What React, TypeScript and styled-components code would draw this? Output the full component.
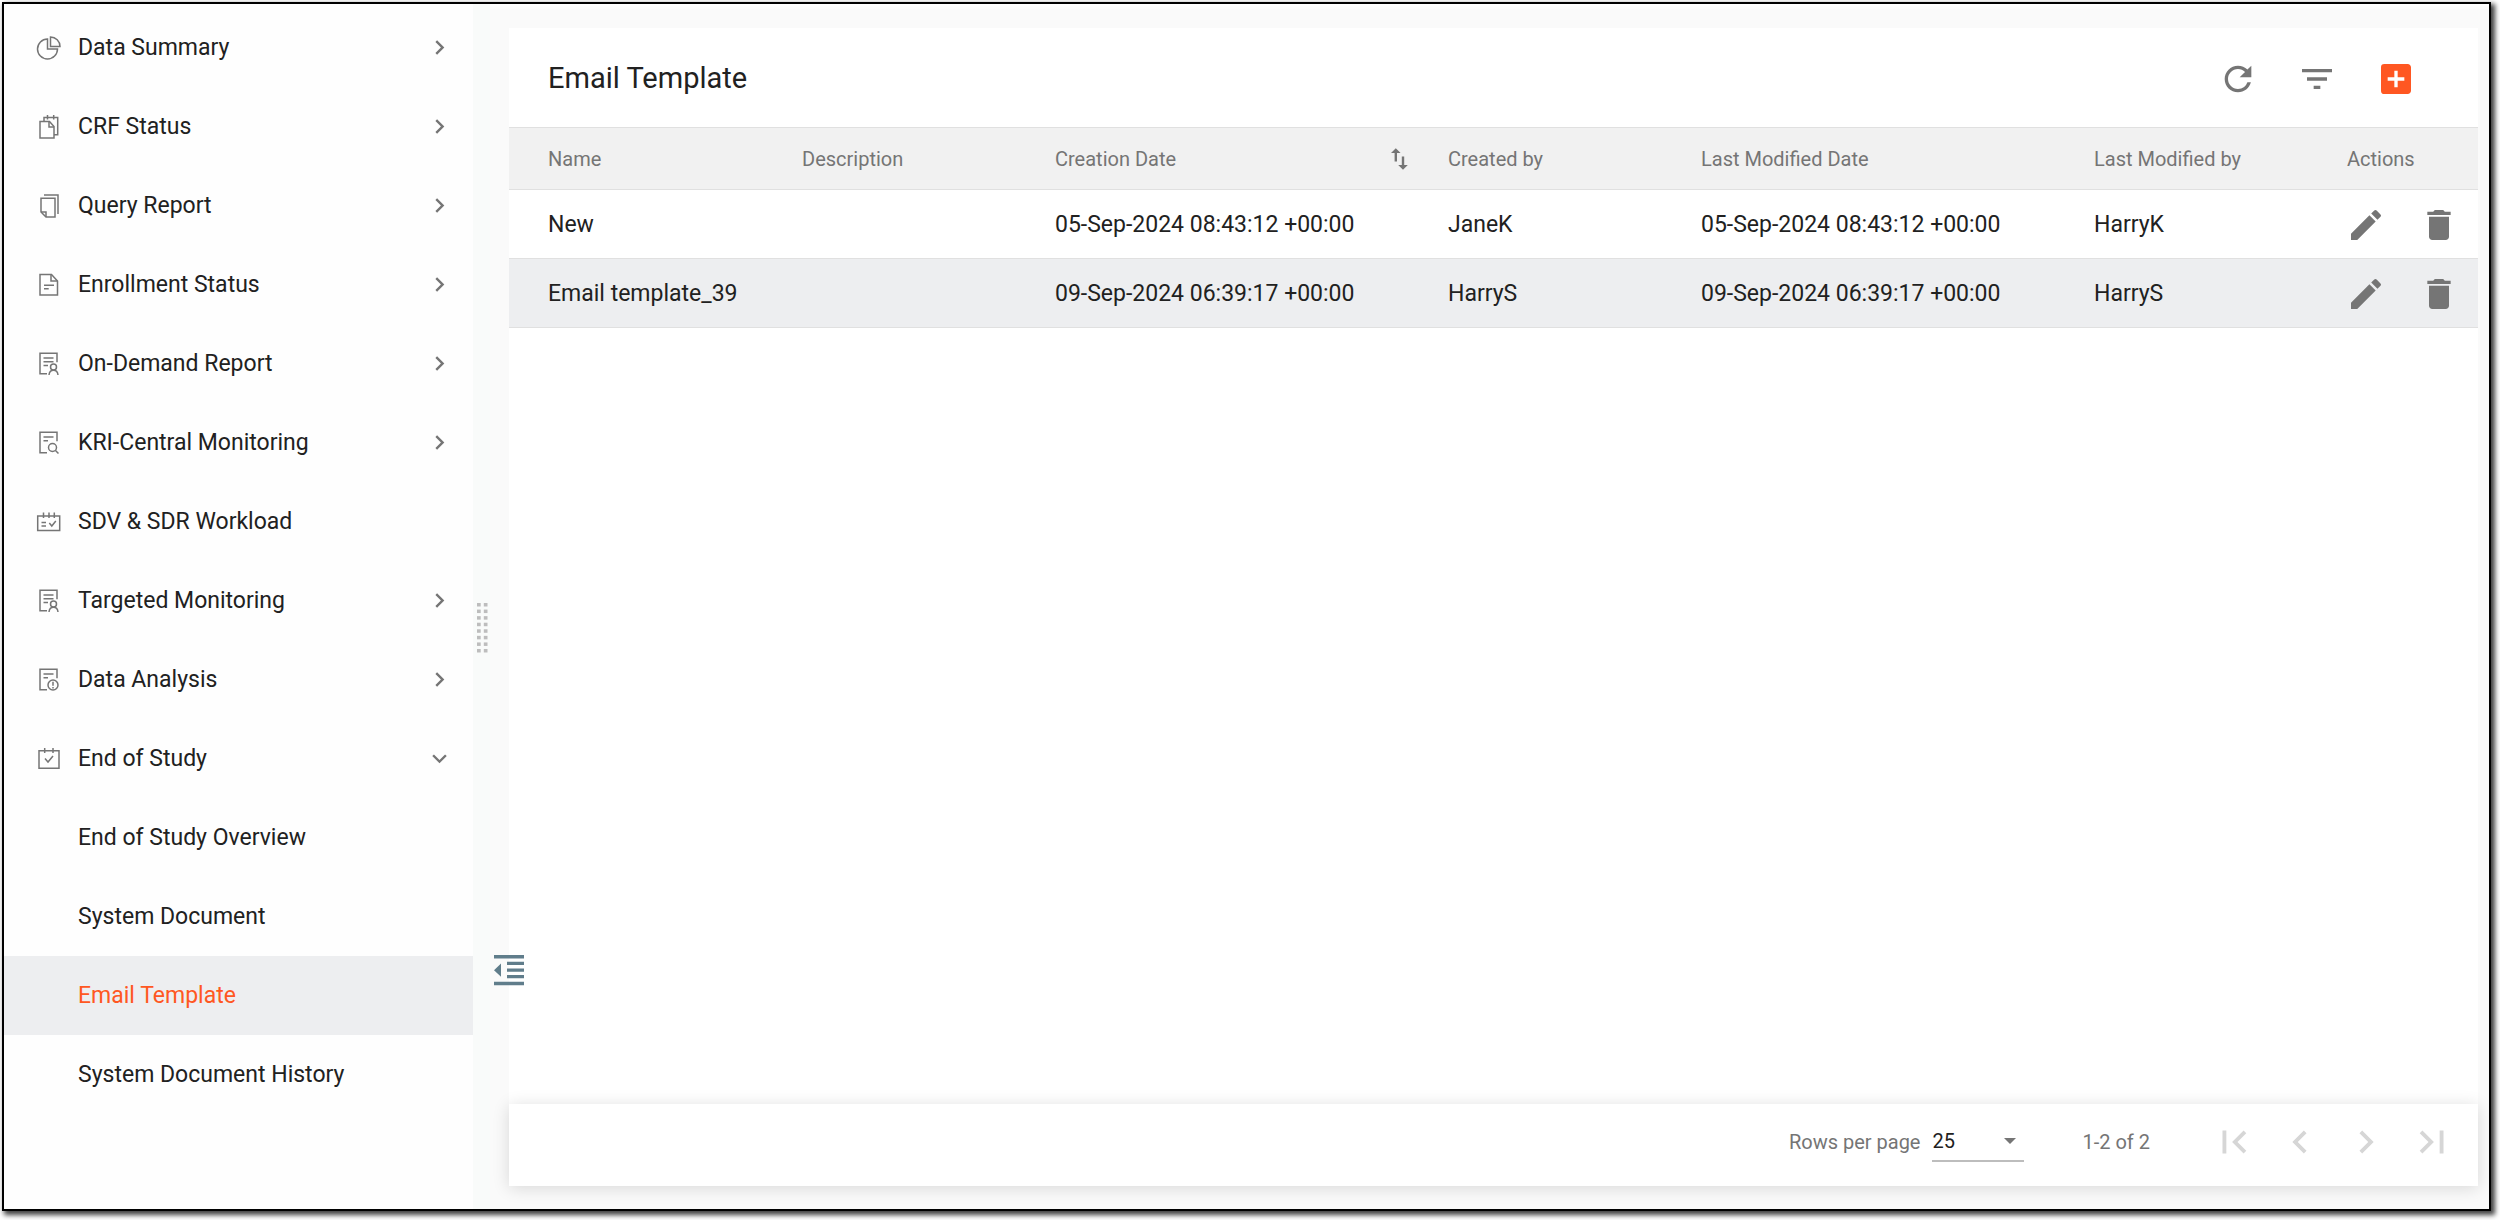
import React, { useState } from 'react';
import styled, { createGlobalStyle } from 'styled-components';
import {
  MdAddBox,
  MdChevronLeft,
  MdChevronRight,
  MdDelete,
  MdEdit,
  MdExpandMore,
  MdFilterList,
  MdFirstPage,
  MdLastPage,
  MdRefresh,
} from 'react-icons/md';

const color = {
  text: '#212121',
  muted: '#757575',
  disabled: '#d6d6d6',
  accent: '#ff5722',
  selected: '#edeef0',
  headerBg: '#f1f1f1',
  line: '#e0e0e0',
  page: '#fafafa',
  slate: '#607d8b',
};

const GlobalStyle = createGlobalStyle`
  *, *::before, *::after { box-sizing: border-box; }
  body {
    margin: 0;
    background: #fff;
    color: ${color.text};
    font-family: Roboto, "Liberation Sans", sans-serif;
    font-size: 23px;
    line-height: 27px;
  }
  button, select { font: inherit; color: inherit; }
  svg { display: block; flex: none; }
`;

const Page = styled.div`
  display: flex;
  min-height: 100vh;
  padding: 2px 9px 9px 2px;
`;

const Frame = styled.div`
  display: flex;
  flex: 1;
  min-width: 0;
  border: 2px solid #000;
  background: linear-gradient(#fff, ${color.page} 6px);
  box-shadow: 3px 3px 5px 1px rgba(0, 0, 0, 0.75);
`;

const Sidebar = styled.nav`
  flex: none;
  width: 469px;
  padding-top: 4px;
  background: #fefefe;
`;

const MenuList = styled.ul`
  margin: 0;
  padding: 0;
  list-style: none;
`;

const MenuButton = styled.button`
  display: flex;
  align-items: center;
  gap: 17px;
  width: 100%;
  height: 79px;
  padding: 0 19px 0 32px;
  border: 0;
  background: none;
  text-align: left;
  cursor: pointer;
`;

const MenuLabel = styled.span`
  flex: 1;
`;

const SubLink = styled.a<{ $active?: boolean }>`
  display: flex;
  align-items: center;
  height: 79px;
  padding-left: 74px;
  text-decoration: none;
  color: ${(p) => (p.$active ? color.accent : color.text)};
  background: ${(p) => (p.$active ? color.selected : 'transparent')};
`;

const Chevron = styled.span`
  display: flex;
  color: ${color.muted};
`;

const Splitter = styled.div`
  position: relative;
  display: flex;
  align-items: center;
  flex: none;
  width: 36px;
  padding: 42px 0 0 4px;
  background: linear-gradient(90deg, #f9fbfa 17px, transparent 17px);
`;

const CollapseButton = styled.button`
  position: absolute;
  bottom: 223px;
  left: 21px;
  z-index: 1;
  padding: 0;
  border: 0;
  background: none;
  color: ${color.slate};
  cursor: pointer;
`;

const Main = styled.main`
  display: flex;
  flex: 1;
  flex-direction: column;
  min-width: 0;
  padding: 24px 11px 23px 0;
`;

const Card = styled.section`
  flex: 1;
  background: #fff;
`;

const CardHeader = styled.header`
  display: flex;
  align-items: center;
  justify-content: space-between;
  height: 99px;
  padding: 2px 43px 0 39px;
`;

const Title = styled.h1`
  margin: 0;
  font-size: 29px;
  font-weight: 400;
  line-height: 35px;
`;

const Toolbar = styled.div`
  display: flex;
`;

const IconButton = styled.button<{ $width: number; $color?: string }>`
  display: flex;
  align-items: center;
  justify-content: center;
  width: ${(p) => p.$width}px;
  height: 46px;
  padding: 0;
  border: 0;
  background: none;
  color: ${(p) => p.$color ?? color.muted};
  cursor: pointer;
`;

const Table = styled.table`
  width: 100%;
  table-layout: fixed;
  border-collapse: separate;
  border-spacing: 0;
`;

const Col = styled.col<{ $width?: number }>`
  width: ${(p) => (p.$width ? `${p.$width}px` : 'auto')};
`;

const HeadCell = styled.th`
  height: 63px;
  padding: 0 0 0 39px;
  border-top: 1px solid ${color.line};
  border-bottom: 1px solid ${color.line};
  background: ${color.headerBg};
  color: ${color.muted};
  font-size: 20px;
  font-weight: 400;
  line-height: 24px;
  text-align: left;
  white-space: nowrap;
`;

const SortButton = styled.button`
  display: flex;
  align-items: center;
  justify-content: space-between;
  width: 100%;
  padding: 0;
  border: 0;
  background: none;
  cursor: pointer;
`;

const Row = styled.tr<{ $highlight?: boolean }>`
  background: ${(p) => (p.$highlight ? color.selected : '#fff')};
`;

const Cell = styled.td`
  height: 69px;
  padding: 0 0 0 39px;
  border-bottom: 1px solid ${color.line};
  white-space: nowrap;
`;

const ActionCell = styled(Cell)`
  padding: 2px 0 0 21px;
`;

const Actions = styled.div`
  display: flex;
`;

const Footer = styled.footer`
  display: flex;
  align-items: center;
  justify-content: flex-end;
  height: 82px;
  padding: 0 13px 6px 39px;
  background: #fff;
  box-shadow: 0 2px 16px rgba(0, 0, 0, 0.14);
  color: ${color.muted};
  font-size: 20px;
  line-height: 24px;
`;

const PageSize = styled.label`
  display: flex;
  align-items: center;
  gap: 12px;
`;

const SelectWrap = styled.span`
  display: grid;
  grid-template-columns: 1fr 28px;
  align-items: center;
  width: 92px;
  height: 40px;
  border-bottom: 2px solid #bdbdbd;
`;

const Select = styled.select`
  grid-area: 1 / 1 / 2 / 3;
  padding: 0;
  border: 0;
  outline: 0;
  appearance: none;
  background: none;
  color: ${color.text};
`;

const Caret = styled.span`
  grid-area: 1 / 2 / 2 / 3;
  justify-self: center;
  border: 6px solid transparent;
  border-top-color: ${color.muted};
  border-bottom: 0;
  pointer-events: none;
`;

const Range = styled.span`
  padding: 0 51px 0 58px;
`;

const Pager = styled.div`
  display: flex;
`;

function Glyph({ children }: { children: React.ReactNode }) {
  return (
    <svg width="25" height="25" viewBox="0 0 25 25" fill="none" stroke="#757575" strokeWidth="1.5" aria-hidden="true">
      {children}
    </svg>
  );
}

const clippedPage = <path d="M11 22.8H4V2.2h17v9" />;

const personReport = (
  <Glyph>
    {clippedPage}
    <path d="M7.5 7h10M7.5 10.8h10M7.5 14.5h4.5" />
    <circle cx="17.5" cy="16" r="3" />
    <path d="M13 24c.3-3 2-4.8 4.5-4.8s4.2 1.8 4.5 4.8" />
  </Glyph>
);

const glyphs = {
  pie: (
    <Glyph>
      <path d="M11.5 4A10 10 0 1 0 21.5 14H11.5z" />
      <path d="M14.5 2v9.5H24A9.5 9.5 0 0 0 14.5 2z" />
    </Glyph>
  ),
  crf: (
    <Glyph>
      <path d="M4 7.5h9.5L18 12.5V24H4z" />
      <path d="M13 7.5V13h5" />
      <path d="M8 7.5v-4h13.7v17.3H18M11.5 1v4.5M17.7 1v4.5" />
    </Glyph>
  ),
  query: (
    <Glyph>
      <path d="M5 5.2h14V24H10L5 19z" />
      <path d="M5 19h5v5M8 2h14v19" />
    </Glyph>
  ),
  enrollment: (
    <Glyph>
      <path d="M4 2.5h11.5l6 6.5v14H4z" />
      <path d="M15 2.5V9h6.5M8 13.3h10M8 16.8h4.7" />
    </Glyph>
  ),
  person: personReport,
  search: (
    <Glyph>
      {clippedPage}
      <path d="M7.5 7h10M7.5 10.8h4.5" />
      <circle cx="16.5" cy="17.5" r="4" />
      <path d="M19.5 20.5l3 3" />
    </Glyph>
  ),
  workload: (
    <Glyph>
      <path d="M1.7 7h22v14.5h-22zM7.5 3.5V9M13 3.5V9M18.3 3.5V9" />
      <path d="M5.5 13.5H10M5.5 17H10M13.3 14l2.5 3 4-5" />
    </Glyph>
  ),
  alert: (
    <Glyph>
      {clippedPage}
      <path d="M7.5 7h10M7.5 10.8h4.5" />
      <circle cx="17" cy="18" r="5" />
      <path d="M17 14.8v4M17 20v1.5" />
    </Glyph>
  ),
  calendar: (
    <Glyph>
      <path d="M3 4.7h20v17.5H3zM8.7 2v5M17 2v5" />
      <path d="M9 12.5l3 3.5 5-6" />
    </Glyph>
  ),
};

const menu: { label: string; glyph: keyof typeof glyphs; leaf?: boolean; open?: boolean }[] = [
  { label: 'Data Summary', glyph: 'pie' },
  { label: 'CRF Status', glyph: 'crf' },
  { label: 'Query Report', glyph: 'query' },
  { label: 'Enrollment Status', glyph: 'enrollment' },
  { label: 'On-Demand Report', glyph: 'person' },
  { label: 'KRI-Central Monitoring', glyph: 'search' },
  { label: 'SDV & SDR Workload', glyph: 'workload', leaf: true },
  { label: 'Targeted Monitoring', glyph: 'person' },
  { label: 'Data Analysis', glyph: 'alert' },
  { label: 'End of Study', glyph: 'calendar', open: true },
];

const subMenu = ['End of Study Overview', 'System Document', 'Email Template', 'System Document History'];

const rows = [
  { name: 'New', description: '', created: '05-Sep-2024 08:43:12 +00:00', createdBy: 'JaneK', modified: '05-Sep-2024 08:43:12 +00:00', modifiedBy: 'HarryK' },
  { name: 'Email template_39', description: '', created: '09-Sep-2024 06:39:17 +00:00', createdBy: 'HarryS', modified: '09-Sep-2024 06:39:17 +00:00', modifiedBy: 'HarryS' },
];

function DragDots() {
  return (
    <svg width="11" height="50" viewBox="0 0 11 50" fill="#bdbdbd" aria-hidden="true">
      {Array.from({ length: 8 }, (_, i) => (
        <React.Fragment key={i}>
          <rect x="0" y={i * 6.57} width="3.7" height="3.5" />
          <rect x="6.8" y={i * 6.57} width="3.7" height="3.5" />
        </React.Fragment>
      ))}
    </svg>
  );
}

export default function App() {
  const [pageSize, setPageSize] = useState('25');
  return (
    <>
      <GlobalStyle />
      <Page>
        <Frame>
          <Sidebar aria-label="Study menu">
            <MenuList>
              {menu.map((item) => (
                <li key={item.label}>
                  <MenuButton type="button" aria-expanded={item.leaf ? undefined : !!item.open}>
                    {glyphs[item.glyph]}
                    <MenuLabel>{item.label}</MenuLabel>
                    {!item.leaf && <Chevron>{item.open ? <MdExpandMore size={29} /> : <MdChevronRight size={29} />}</Chevron>}
                  </MenuButton>
                  {item.open && (
                    <MenuList>
                      {subMenu.map((label) => (
                        <li key={label}>
                          <SubLink href="#" $active={label === 'Email Template'}>
                            {label}
                          </SubLink>
                        </li>
                      ))}
                    </MenuList>
                  )}
                </li>
              ))}
            </MenuList>
          </Sidebar>

          <Splitter>
            <DragDots />
            <CollapseButton type="button" aria-label="Collapse menu">
              <svg width="30" height="31" viewBox="0 0 30 31" fill="currentColor" aria-hidden="true">
                <path d="M0 0h30v3.5H0zM13 6.7h17V10H13zM13 13.5h17v3.3H13zM13 20h17v3.3H13zM0 26.7h30v3.5H0zM0 15.2L7 8.5v13.3z" />
              </svg>
            </CollapseButton>
          </Splitter>

          <Main>
            <Card>
              <CardHeader>
                <Title>Email Template</Title>
                <Toolbar>
                  <IconButton type="button" $width={79} aria-label="Refresh">
                    <MdRefresh size={40} />
                  </IconButton>
                  <IconButton type="button" $width={79} aria-label="Filter">
                    <MdFilterList size={40} />
                  </IconButton>
                  <IconButton type="button" $width={79} $color={color.accent} aria-label="Add template">
                    <MdAddBox size={40} />
                  </IconButton>
                </Toolbar>
              </CardHeader>
              <Table>
                <colgroup>
                  <Col $width={254} />
                  <Col $width={253} />
                  <Col />
                  <Col $width={253} />
                  <Col />
                  <Col $width={253} />
                  <Col $width={170} />
                </colgroup>
                <thead>
                  <tr>
                    <HeadCell>Name</HeadCell>
                    <HeadCell>Description</HeadCell>
                    <HeadCell>
                      <SortButton type="button">
                        Creation Date
                        <svg width="18" height="24" viewBox="5 2 15 20" fill="currentColor" aria-hidden="true">
                          <path d="M9 3L5 6.99h3V14h2V6.99h3L9 3zm7 14.01V10h-2v7.01h-3L15 21l4-3.99h-3z" />
                        </svg>
                      </SortButton>
                    </HeadCell>
                    <HeadCell>Created by</HeadCell>
                    <HeadCell>Last Modified Date</HeadCell>
                    <HeadCell>Last Modified by</HeadCell>
                    <HeadCell>Actions</HeadCell>
                  </tr>
                </thead>
                <tbody>
                  {rows.map((row, i) => (
                    <Row key={row.name} $highlight={i % 2 === 1}>
                      <Cell>{row.name}</Cell>
                      <Cell>{row.description}</Cell>
                      <Cell>{row.created}</Cell>
                      <Cell>{row.createdBy}</Cell>
                      <Cell>{row.modified}</Cell>
                      <Cell>{row.modifiedBy}</Cell>
                      <ActionCell>
                        <Actions>
                          <IconButton type="button" $width={73} aria-label={`Edit ${row.name}`}>
                            <MdEdit size={40} />
                          </IconButton>
                          <IconButton type="button" $width={73} aria-label={`Delete ${row.name}`}>
                            <MdDelete size={40} />
                          </IconButton>
                        </Actions>
                      </ActionCell>
                    </Row>
                  ))}
                </tbody>
              </Table>
            </Card>
            <Footer>
              <PageSize>
                Rows per page
                <SelectWrap>
                  <Select value={pageSize} onChange={(e) => setPageSize(e.target.value)}>
                    <option>25</option>
                    <option>50</option>
                    <option>100</option>
                  </Select>
                  <Caret />
                </SelectWrap>
              </PageSize>
              <Range>1-2 of 2</Range>
              <Pager>
                <IconButton type="button" $width={66} $color={color.disabled} aria-label="First page">
                  <MdFirstPage size={46} />
                </IconButton>
                <IconButton type="button" $width={66} $color={color.disabled} aria-label="Previous page">
                  <MdChevronLeft size={46} />
                </IconButton>
                <IconButton type="button" $width={66} $color={color.disabled} aria-label="Next page">
                  <MdChevronRight size={46} />
                </IconButton>
                <IconButton type="button" $width={66} $color={color.disabled} aria-label="Last page">
                  <MdLastPage size={46} />
                </IconButton>
              </Pager>
            </Footer>
          </Main>
        </Frame>
      </Page>
    </>
  );
}
